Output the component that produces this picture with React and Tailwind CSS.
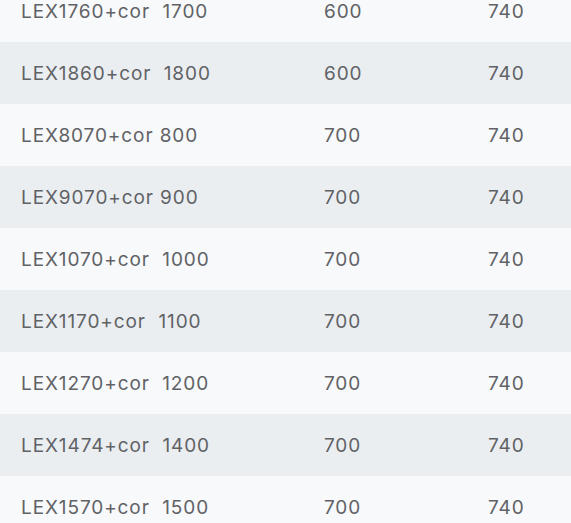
const rows = [
  ["LEX1760+cor  1700", "600", "740"],
  ["LEX1860+cor  1800", "600", "740"],
  ["LEX8070+cor 800", "700", "740"],
  ["LEX9070+cor 900", "700", "740"],
  ["LEX1070+cor  1000", "700", "740"],
  ["LEX1170+cor  1100", "700", "740"],
  ["LEX1270+cor  1200", "700", "740"],
  ["LEX1474+cor  1400", "700", "740"],
  ["LEX1570+cor  1500", "700", "740"],
]

export default function App() {
  return (
    <div className="w-[571px] h-[523px] overflow-hidden bg-[#f8f9fb]">
      <div className="-mt-5" style={{ fontFamily: "Inter, sans-serif" }}>
        {rows.map((r, i) => (
          <div
            key={i}
            className={`grid grid-cols-[303px_164px_1fr] h-[62px] pt-[2px] items-center text-[19px] tracking-[0.9px] text-[#606266] ${
              i % 2 === 1 ? "bg-[#ebeef1]" : "bg-[#f8f9fb]"
            }`}
          >
            <div className="pl-[21px] whitespace-pre">{r[0]}</div>
            <div className="pl-[21px]">{r[1]}</div>
            <div className="pl-[21px]">{r[2]}</div>
          </div>
        ))}
      </div>
    </div>
  )
}
